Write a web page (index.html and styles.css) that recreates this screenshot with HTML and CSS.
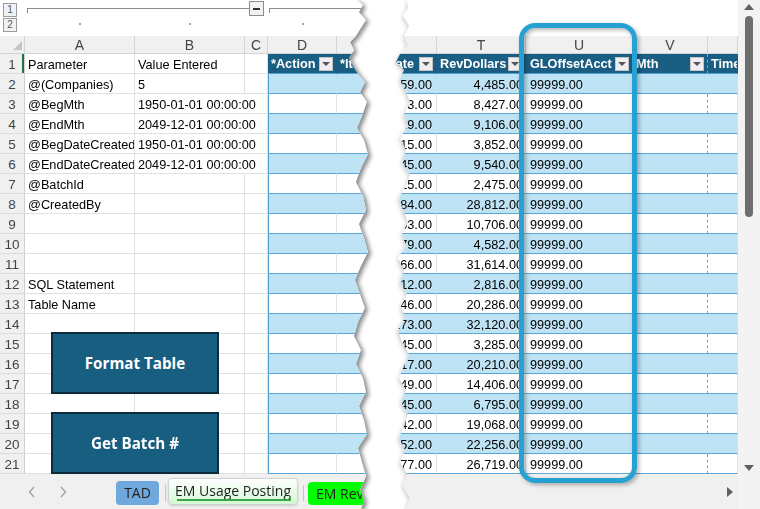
FILE: index.html
```html
<!DOCTYPE html>
<html lang="en">
<head>
    <meta charset="UTF-8">
    <meta name="viewport" content="width=device-width, initial-scale=1.0">
    <title>EM Usage Posting</title>
    <link rel="stylesheet" href="styles.css">
</head>
<body>
<div class="page">

    <!-- left piece of the torn sheet -->
    <div class="tear-l">
        <div class="sheet left">
            <div class="outline">
                <div class="levels"><span class="lvl">1</span><span class="lvl">2</span></div>
                <div class="groups">
                    <div class="group-line">
                        <span class="bracket b1"></span>
                        <span class="minus"></span>
                        <span class="bracket b2"></span>
                    </div>
                    <div class="group-dots">
                        <span class="wa"><i></i></span>
                        <span class="wb"><i></i></span>
                        <span class="wc"></span>
                        <span class="wd"><i></i></span>
                    </div>
                </div>
            </div>

            <div class="grid">
                <div class="row colhead">
                    <span class="rh corner"></span><span class="c wa">A</span><span class="c wb">B</span><span class="c wc">C</span><span class="c wd">D</span><span class="c we"></span>
                </div>
                <div class="row">
                    <span class="rh sel">1</span><span class="c wa">Parameter</span><span class="c wb">Value Entered</span><span class="c wc"></span><span class="c wd hd">*Action<i class="flt"></i></span><span class="c we hd">*Item<i class="flt"></i></span>
                </div>
                <div class="row band">
                    <span class="rh">2</span><span class="c wa">@(Companies)</span><span class="c wb">5</span><span class="c wc"></span><span class="c wd t"></span><span class="c we t"></span>
                </div>
                <div class="row">
                    <span class="rh">3</span><span class="c wa">@BegMth</span><span class="c wb spill">1950-01-01 00:00:00</span><span class="c wc"></span><span class="c wd t"></span><span class="c we t"></span>
                </div>
                <div class="row band">
                    <span class="rh">4</span><span class="c wa">@EndMth</span><span class="c wb spill">2049-12-01 00:00:00</span><span class="c wc"></span><span class="c wd t"></span><span class="c we t"></span>
                </div>
                <div class="row">
                    <span class="rh">5</span><span class="c wa">@BegDateCreated</span><span class="c wb spill">1950-01-01 00:00:00</span><span class="c wc"></span><span class="c wd t"></span><span class="c we t"></span>
                </div>
                <div class="row band">
                    <span class="rh">6</span><span class="c wa">@EndDateCreated</span><span class="c wb spill">2049-12-01 00:00:00</span><span class="c wc"></span><span class="c wd t"></span><span class="c we t"></span>
                </div>
                <div class="row">
                    <span class="rh">7</span><span class="c wa">@BatchId</span><span class="c wb"></span><span class="c wc"></span><span class="c wd t"></span><span class="c we t"></span>
                </div>
                <div class="row band">
                    <span class="rh">8</span><span class="c wa">@CreatedBy</span><span class="c wb"></span><span class="c wc"></span><span class="c wd t"></span><span class="c we t"></span>
                </div>
                <div class="row">
                    <span class="rh">9</span><span class="c wa"></span><span class="c wb"></span><span class="c wc"></span><span class="c wd t"></span><span class="c we t"></span>
                </div>
                <div class="row band">
                    <span class="rh">10</span><span class="c wa"></span><span class="c wb"></span><span class="c wc"></span><span class="c wd t"></span><span class="c we t"></span>
                </div>
                <div class="row">
                    <span class="rh">11</span><span class="c wa"></span><span class="c wb"></span><span class="c wc"></span><span class="c wd t"></span><span class="c we t"></span>
                </div>
                <div class="row band">
                    <span class="rh">12</span><span class="c wa">SQL Statement</span><span class="c wb"></span><span class="c wc"></span><span class="c wd t"></span><span class="c we t"></span>
                </div>
                <div class="row">
                    <span class="rh">13</span><span class="c wa">Table Name</span><span class="c wb"></span><span class="c wc"></span><span class="c wd t"></span><span class="c we t"></span>
                </div>
                <div class="row band">
                    <span class="rh">14</span><span class="c wa"></span><span class="c wb"></span><span class="c wc"></span><span class="c wd t"></span><span class="c we t"></span>
                </div>
                <div class="row">
                    <span class="rh">15</span><span class="c wa"></span><span class="c wb"></span><span class="c wc"></span><span class="c wd t"></span><span class="c we t"></span>
                </div>
                <div class="row band">
                    <span class="rh">16</span><span class="c wa"></span><span class="c wb"></span><span class="c wc"></span><span class="c wd t"></span><span class="c we t"></span>
                </div>
                <div class="row">
                    <span class="rh">17</span><span class="c wa"></span><span class="c wb"></span><span class="c wc"></span><span class="c wd t"></span><span class="c we t"></span>
                </div>
                <div class="row band">
                    <span class="rh">18</span><span class="c wa"></span><span class="c wb"></span><span class="c wc"></span><span class="c wd t"></span><span class="c we t"></span>
                </div>
                <div class="row">
                    <span class="rh">19</span><span class="c wa"></span><span class="c wb"></span><span class="c wc"></span><span class="c wd t"></span><span class="c we t"></span>
                </div>
                <div class="row band">
                    <span class="rh">20</span><span class="c wa"></span><span class="c wb"></span><span class="c wc"></span><span class="c wd t"></span><span class="c we t"></span>
                </div>
                <div class="row">
                    <span class="rh">21</span><span class="c wa"></span><span class="c wb"></span><span class="c wc"></span><span class="c wd t"></span><span class="c we t"></span>
                </div>

                <button class="macro fmt">Format Table</button>
                <button class="macro batch">Get Batch #</button>
            </div>

            <div class="tabbar">
                <div class="nav">
                    <svg class="chev" width="8" height="12" viewBox="0 0 8 12"><path d="M6 1 L1.5 6 L6 11" fill="none" stroke="#a0a0a0" stroke-width="1.3"/></svg>
                    <svg class="chev next" width="8" height="12" viewBox="0 0 8 12"><path d="M2 1 L6.5 6 L2 11" fill="none" stroke="#a0a0a0" stroke-width="1.3"/></svg>
                </div>
                <span class="tab tad">TAD</span>
                <span class="sep"></span>
                <span class="tab active">EM Usage Posting</span>
                <span class="sep"></span>
                <span class="tab green">EM Revenue</span>
            </div>
        </div>
    </div>

    <!-- right piece of the torn sheet -->
    <div class="tear-r">
        <div class="sheet right">
            <div class="main">
                <div class="outline"></div>
                <div class="grid">
                    <div class="row colhead">
                        <span class="c ws"></span><span class="c wt">T</span><span class="c wu">U</span><span class="c wv">V</span><span class="c ww"></span>
                    </div>
                    <div class="row">
                        <span class="c ws hd end">Rate<i class="flt"></i></span><span class="c wt hd">RevDollars<i class="flt"></i></span><span class="c wu hd">GLOffsetAcct<i class="flt"></i></span><span class="c wv hd">Mth<i class="flt"></i></span><span class="c ww hd">Time</span>
                    </div>
                    <div class="row band"><span class="c ws t num">359.00</span><span class="c wt t num">4,485.00</span><span class="c wu t">99999.00</span><span class="c wv t"></span><span class="c ww t"></span></div>
                    <div class="row"><span class="c ws t num">653.00</span><span class="c wt t num">8,427.00</span><span class="c wu t">99999.00</span><span class="c wv t"></span><span class="c ww t"></span></div>
                    <div class="row band"><span class="c ws t num">929.00</span><span class="c wt t num">9,106.00</span><span class="c wu t">99999.00</span><span class="c wv t"></span><span class="c ww t"></span></div>
                    <div class="row"><span class="c ws t num">815.00</span><span class="c wt t num">3,852.00</span><span class="c wu t">99999.00</span><span class="c wv t"></span><span class="c ww t"></span></div>
                    <div class="row band"><span class="c ws t num">545.00</span><span class="c wt t num">9,540.00</span><span class="c wu t">99999.00</span><span class="c wv t"></span><span class="c ww t"></span></div>
                    <div class="row"><span class="c ws t num">825.00</span><span class="c wt t num">2,475.00</span><span class="c wu t">99999.00</span><span class="c wv t"></span><span class="c ww t"></span></div>
                    <div class="row band"><span class="c ws t num">184.00</span><span class="c wt t num">28,812.00</span><span class="c wu t">99999.00</span><span class="c wv t"></span><span class="c ww t"></span></div>
                    <div class="row"><span class="c ws t num">653.00</span><span class="c wt t num">10,706.00</span><span class="c wu t">99999.00</span><span class="c wv t"></span><span class="c ww t"></span></div>
                    <div class="row band"><span class="c ws t num">779.00</span><span class="c wt t num">4,582.00</span><span class="c wu t">99999.00</span><span class="c wv t"></span><span class="c ww t"></span></div>
                    <div class="row"><span class="c ws t num">366.00</span><span class="c wt t num">31,614.00</span><span class="c wu t">99999.00</span><span class="c wv t"></span><span class="c ww t"></span></div>
                    <div class="row band"><span class="c ws t num">412.00</span><span class="c wt t num">2,816.00</span><span class="c wu t">99999.00</span><span class="c wv t"></span><span class="c ww t"></span></div>
                    <div class="row"><span class="c ws t num">546.00</span><span class="c wt t num">20,286.00</span><span class="c wu t">99999.00</span><span class="c wv t"></span><span class="c ww t"></span></div>
                    <div class="row band"><span class="c ws t num">173.00</span><span class="c wt t num">32,120.00</span><span class="c wu t">99999.00</span><span class="c wv t"></span><span class="c ww t"></span></div>
                    <div class="row"><span class="c ws t num">445.00</span><span class="c wt t num">3,285.00</span><span class="c wu t">99999.00</span><span class="c wv t"></span><span class="c ww t"></span></div>
                    <div class="row band"><span class="c ws t num">317.00</span><span class="c wt t num">20,210.00</span><span class="c wu t">99999.00</span><span class="c wv t"></span><span class="c ww t"></span></div>
                    <div class="row"><span class="c ws t num">349.00</span><span class="c wt t num">14,406.00</span><span class="c wu t">99999.00</span><span class="c wv t"></span><span class="c ww t"></span></div>
                    <div class="row band"><span class="c ws t num">545.00</span><span class="c wt t num">6,795.00</span><span class="c wu t">99999.00</span><span class="c wv t"></span><span class="c ww t"></span></div>
                    <div class="row"><span class="c ws t num">442.00</span><span class="c wt t num">19,068.00</span><span class="c wu t">99999.00</span><span class="c wv t"></span><span class="c ww t"></span></div>
                    <div class="row band"><span class="c ws t num">552.00</span><span class="c wt t num">22,256.00</span><span class="c wu t">99999.00</span><span class="c wv t"></span><span class="c ww t"></span></div>
                    <div class="row"><span class="c ws t num">477.00</span><span class="c wt t num">26,719.00</span><span class="c wu t">99999.00</span><span class="c wv t"></span><span class="c ww t"></span></div>
                </div>
                <div class="hscroll">
                    <svg width="8" height="10" viewBox="0 0 8 10"><path d="M1 0 L7 5 L1 10 Z" fill="#606060"/></svg>
                </div>
            </div>
            <div class="vscroll">
                <svg width="10" height="8" viewBox="0 0 10 8"><path d="M0 7 L5 1 L10 7 Z" fill="#606060"/></svg>
                <span class="thumb"></span>
                <svg class="down" width="10" height="8" viewBox="0 0 10 8"><path d="M0 1 L5 7 L10 1 Z" fill="#606060"/></svg>
            </div>
            <div class="ring"></div>
        </div>
    </div>

</div>
</body>
</html>
```

FILE: styles.css
```css
* {
    box-sizing: border-box;
}

body {
    margin: 0;
    background: #fff;
    color: #000;
    font-family: "Liberation Sans", Arial, sans-serif;
    font-size: 12.7px;
}

.page {
    display: flex;
    width: 760px;
    height: 509px;
    overflow: hidden;
}

/* torn pieces */
.tear-l {
    width: 372px;
    flex: none;
    filter: drop-shadow(3px 2px 2px rgba(0, 0, 0, 0.45));
}

.tear-r {
    width: 370px;
    flex: none;
    margin-left: 18px;
    filter: drop-shadow(-1px 2px 2px rgba(0, 0, 0, 0.2));
}

.sheet {
    height: 509px;
    background: #fff;
    display: flex;
    flex-direction: column;
}

.left {
    clip-path: polygon(0 0, 357px 0, 363px 5px, 359px 12px, 366px 20px, 361px 28px, 356px 36px, 350px 42px, 354px 50px, 349px 58px, 353px 66px, 358px 74px, 365px 82px, 360px 92px, 367px 102px, 362px 116px, 357px 128px, 364px 140px, 368px 154px, 361px 168px, 356px 182px, 363px 196px, 366px 210px, 359px 224px, 364px 238px, 368px 252px, 361px 266px, 355px 280px, 360px 294px, 365px 308px, 358px 322px, 354px 336px, 361px 350px, 356px 364px, 363px 378px, 366px 392px, 359px 406px, 364px 420px, 367px 434px, 358px 448px, 362px 462px, 366px 476px, 360px 490px, 364px 500px, 361px 509px, 0 509px);
}

.right {
    flex-direction: row;
    position: relative;
    clip-path: polygon(17px 0, 100% 0, 100% 100%, 16px 509px, 20px 498px, 13px 486px, 17px 474px, 10px 462px, 15px 450px, 9px 438px, 14px 426px, 18px 414px, 11px 402px, 16px 390px, 9px 378px, 14px 366px, 19px 354px, 12px 342px, 8px 330px, 15px 318px, 11px 306px, 17px 294px, 10px 282px, 14px 270px, 8px 258px, 16px 246px, 12px 234px, 18px 222px, 13px 210px, 9px 198px, 16px 186px, 20px 174px, 12px 162px, 16px 150px, 10px 138px, 18px 126px, 14px 114px, 20px 102px, 15px 90px, 10px 80px, 14px 70px, 6px 62px, 10px 54px, 18px 46px, 14px 36px, 19px 26px, 13px 16px, 18px 8px);
}

/* outline (grouping) strip */
.outline {
    height: 36px;
    display: flex;
    flex: none;
}

.levels {
    width: 25px;
    padding: 3px 0 0 3px;
    display: flex;
    flex-direction: column;
    gap: 1px;
}

.lvl {
    width: 14px;
    height: 14px;
    border: 1px solid #9a9a9a;
    background: #f2f2f2;
    color: #555;
    font-size: 10px;
    line-height: 12px;
    text-align: center;
}

.groups {
    flex: 1;
}

.group-line {
    height: 18px;
    display: flex;
    align-items: flex-start;
}

.bracket {
    margin-top: 8px;
    height: 5px;
    border-top: 1px solid #8c8c8c;
    border-left: 1px solid #8c8c8c;
}

.b1 {
    margin-left: 2px;
    width: 222px;
}

.b2 {
    margin-left: 5px;
    flex: 1;
}

.minus {
    width: 15px;
    height: 15px;
    margin-top: 1px;
    border: 1px solid #8c8c8c;
    background: #f2f2f2;
    display: flex;
    align-items: center;
    justify-content: center;
}

.minus::after {
    content: "";
    width: 7px;
    height: 2px;
    background: #333;
}

.group-dots {
    height: 18px;
    display: flex;
}

.group-dots span {
    display: flex;
    justify-content: center;
    padding-top: 5px;
}

.group-dots i {
    width: 2px;
    height: 2px;
    background: #a8a8a8;
}

/* grid */
.grid {
    position: relative;
    flex: none;
}

.row {
    display: flex;
    height: 20px;
}

.rh {
    width: 25px;
    flex: none;
    background: #f0f0f0;
    border-right: 1px solid #cfcfcf;
    border-bottom: 1px solid #dcdcdc;
    color: #444;
    font-size: 13.5px;
    line-height: 21px;
    text-align: center;
}

.rh.sel {
    box-shadow: inset -2px 0 #1e7145;
}

.c {
    flex: none;
    height: 20px;
    padding: 0 3px;
    border-right: 1px solid #e1e1e1;
    border-bottom: 1px solid #e1e1e1;
    line-height: 22px;
    white-space: nowrap;
    overflow: hidden;
}

.wa { width: 110px; }
.wb { width: 110px; }
.wc { width: 23px; }
.wd { width: 69px; }
.we { width: 35px; }
.ws { width: 47px; }
.wt { width: 89px; }
.wu { width: 107px; }
.wv { width: 75px; }
.ww { width: 30px; }

.spill {
    overflow: visible;
    border-right-color: transparent;
    position: relative;
    z-index: 1;
}

.colhead {
    height: 18px;
}

.colhead .c,
.colhead .rh {
    height: 18px;
    background: #f0f0f0;
    border-right-color: #d4d4d4;
    border-bottom-color: #d4d4d4;
    color: #444;
    font-size: 14px;
    line-height: 18px;
    text-align: center;
}

.corner {
    position: relative;
}

.corner::after {
    content: "";
    position: absolute;
    right: 2px;
    bottom: 3px;
    border-left: 9px solid transparent;
    border-bottom: 9px solid #c6c6c6;
}

/* excel table */
.hd {
    background: #1b5e83;
    color: #fff;
    font-weight: bold;
    border-right-color: #1b5e83;
    border-bottom-color: #4f9fd2;
    display: flex;
    align-items: center;
    justify-content: space-between;
    padding: 1px 3px 0 3px;
    line-height: 19px;
}

.hd.end {
    justify-content: flex-end;
    gap: 5px;
}

.flt {
    width: 14px;
    height: 14px;
    flex: none;
    margin-top: -1px;
    background: #efefef;
    border: 1px solid #c4c4c4;
    display: flex;
    align-items: center;
    justify-content: center;
}

.flt::after {
    content: "";
    border-left: 4px solid transparent;
    border-right: 4px solid transparent;
    border-top: 4px solid #555;
}

.t {
    border-bottom-color: #5aa7d7;
}

.band .t {
    background: #bee3f4;
    border-right-color: #bee3f4;
}

.wd.t {
    box-shadow: inset 1px 0 #4f9fd2;
}

.num {
    text-align: right;
    padding-right: 4px;
}

.wt.num {
    padding-right: 2px;
}

.wu.t,
.wu.hd {
    padding-left: 4px;
}

.wv {
    border-right: 1px dashed #9a9a9a;
}

.colhead .wv {
    border-right: 1px solid #d4d4d4;
}

/* macro buttons */
.macro {
    position: absolute;
    left: 51px;
    width: 168px;
    height: 62px;
    background: #175e80;
    border: 2px solid #0d2a3b;
    color: #fff;
    font-family: "Open Sans", sans-serif;
    font-weight: 700;
    font-size: 15.2px;
    padding: 0;
}

.fmt {
    top: 296px;
}

.batch {
    top: 376px;
}

/* sheet tabs */
.tabbar {
    height: 35px;
    flex: none;
    background: #f0f0f0;
    display: flex;
    align-items: flex-end;
    padding-bottom: 4px;
    font-family: "Open Sans", sans-serif;
    font-size: 14px;
    color: #1f1f1f;
}

.nav {
    width: 116px;
    flex: none;
    align-self: stretch;
    display: flex;
    align-items: center;
    padding-top: 4px;
}

.chev {
    margin-left: 28px;
}

.chev.next {
    margin-left: 23px;
}

.tab {
    flex: none;
    border-radius: 4px;
    white-space: nowrap;
    text-align: center;
}

.tad {
    width: 43px;
    height: 24px;
    line-height: 24px;
    background: #6fa8dc;
}

.sep {
    width: 1px;
    height: 16px;
    background: #c4c4c4;
    margin: 0 0 4px 5px;
    flex: none;
}

.tad + .sep {
    margin-left: 6px;
}

.active {
    width: 130px;
    height: 27px;
    line-height: 24px;
    margin-left: 2px;
    background: linear-gradient(#ffffff, #d3f8d3);
    border: 1px solid #d2d2d2;
    box-shadow: 0 1px 2px rgba(0, 0, 0, 0.15);
    position: relative;
}

.active::after {
    content: "";
    position: absolute;
    left: 8px;
    right: 6px;
    bottom: 3px;
    height: 2px;
    background: #3aa64a;
}

.green {
    width: 90px;
    height: 23px;
    line-height: 23px;
    margin-left: 4px;
    background: #00ff00;
    text-align: left;
    padding-left: 8px;
}

/* right piece extras */
.main {
    width: 348px;
    display: flex;
    flex-direction: column;
}

.hscroll {
    height: 35px;
    flex: none;
    background: #f0f0f0;
    display: flex;
    align-items: center;
    justify-content: flex-end;
    padding: 0 4px 0 0;
}

.vscroll {
    width: 22px;
    background: #f3f3f3;
    display: flex;
    flex-direction: column;
    align-items: center;
    padding: 3px 0 37px;
}

.thumb {
    width: 8px;
    height: 201px;
    margin-top: 5px;
    border-radius: 4px;
    background: #6e6e6e;
}

.vscroll .down {
    margin-top: auto;
}

.ring {
    position: absolute;
    left: 129px;
    top: 23px;
    width: 118px;
    height: 460px;
    border: 5px solid #27a1d2;
    border-radius: 16px;
    box-shadow: 2px 2px 4px rgba(0, 0, 0, 0.3), inset 2px 2px 4px rgba(0, 0, 0, 0.3);
}
```
